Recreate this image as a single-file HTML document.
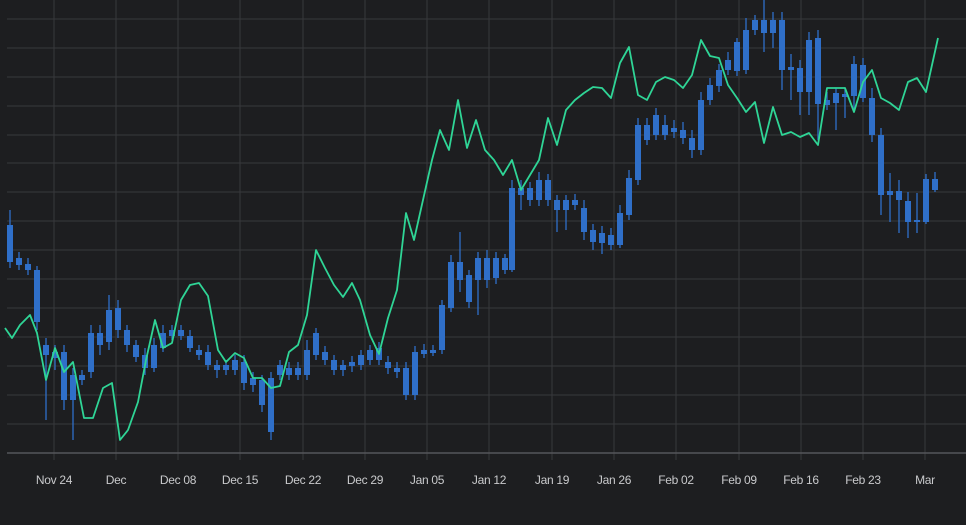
<!DOCTYPE html>
<html><head><meta charset="utf-8"><style>
html,body{margin:0;padding:0;background:#1d1e20;}
svg{display:block}
text{font-family:"Liberation Sans",sans-serif;font-size:12px;fill:#c9cacc;letter-spacing:-0.3px}
</style></head><body>
<svg width="966" height="525" viewBox="0 0 966 525" xmlns="http://www.w3.org/2000/svg">
<rect width="966" height="525" fill="#1d1e20"/>
<g stroke="#38393c" stroke-width="1">
<path d="M7 19H966M7 48H966M7 77H966M7 106H966M7 135H966M7 163H966M7 192H966M7 221H966M7 250H966M7 279H966M7 308H966M7 337H966M7 366H966M7 395H966M7 424H966"/>
<path d="M54 0V460M116 0V460M178 0V460M240 0V460M303 0V460M365 0V460M427 0V460M489 0V460M552 0V460M614 0V460M676 0V460M739 0V460M801 0V460M863 0V460M925 0V460"/>
</g>
<path d="M7 453H966" stroke="#55565a" stroke-width="1.5"/>
<g fill="#c9cacc">
<text x="54" y="484" text-anchor="middle">Nov 24</text>
<text x="116" y="484" text-anchor="middle">Dec</text>
<text x="178" y="484" text-anchor="middle">Dec 08</text>
<text x="240" y="484" text-anchor="middle">Dec 15</text>
<text x="303" y="484" text-anchor="middle">Dec 22</text>
<text x="365" y="484" text-anchor="middle">Dec 29</text>
<text x="427" y="484" text-anchor="middle">Jan 05</text>
<text x="489" y="484" text-anchor="middle">Jan 12</text>
<text x="552" y="484" text-anchor="middle">Jan 19</text>
<text x="614" y="484" text-anchor="middle">Jan 26</text>
<text x="676" y="484" text-anchor="middle">Feb 02</text>
<text x="739" y="484" text-anchor="middle">Feb 09</text>
<text x="801" y="484" text-anchor="middle">Feb 16</text>
<text x="863" y="484" text-anchor="middle">Feb 23</text>
<text x="925" y="484" text-anchor="middle">Mar</text>
</g>
<g stroke="#2f6fc8" stroke-width="1.3">
<path d="M10 210V268M19 252V270M28 258V275M37 266V330M46 338V420M55 345V370M64 345V410M73 368V440M82 370V385M91 325V378M100 325V355M109 295V350M118 300V338M127 325V352M136 340V362M145 348V375M154 338V372M163 325V352M172 325V340M181 325V340M190 330V352M199 345V360M208 345V370M217 360V378M226 360V375M235 355V375M244 355V390M253 372V392M262 375V412M271 372V440M280 360V380M289 362V380M298 362V380M307 340V380M316 328V360M325 346V365M334 355V375M343 360V376M352 356V372M361 350V370M370 345V365M379 342V365M388 356V374M397 362V378M406 362V400M415 346V400M424 344V358M433 345V356M442 300V354M451 255V312M460 232V292M469 270V308M478 252V315M487 250V288M496 252V284M505 254V274M512 180V272M521 180V210M530 182V206M539 172V206M548 174V206M557 195V232M566 195V230M575 194V210M584 200V240M593 224V250M602 226V254M611 228V250M620 205V248M629 170V220M638 118V185M647 118V145M656 108V140M665 115V140M674 120V138M683 122V144M692 130V158M701 92V155M710 78V105M719 64V92M728 52V75M737 38V76M746 18V74M755 15V35M764 0V52M773 12V48M782 12V90M791 54V100M800 60V115M809 32V115M818 30V140M827 92V110M836 88V130M845 88V118M854 56V110M863 58V102M872 88V142M881 128V215M890 173V222M899 180V233M908 192V238M917 193V233M926 174V224M935 172V192"/>
</g>
<g fill="#2f6fc8">
<rect x="7" y="225" width="6" height="37"/><rect x="16" y="258" width="6" height="7"/><rect x="25" y="264" width="6" height="6"/><rect x="34" y="270" width="6" height="52"/><rect x="43" y="345" width="6" height="10"/><rect x="52" y="352" width="6" height="6"/><rect x="61" y="352" width="6" height="48"/><rect x="70" y="375" width="6" height="25"/><rect x="79" y="375" width="6" height="5"/><rect x="88" y="333" width="6" height="39"/><rect x="97" y="333" width="6" height="12"/><rect x="106" y="310" width="6" height="32"/><rect x="115" y="308" width="6" height="22"/><rect x="124" y="330" width="6" height="15"/><rect x="133" y="345" width="6" height="12"/><rect x="142" y="355" width="6" height="13"/><rect x="151" y="345" width="6" height="23"/><rect x="160" y="333" width="6" height="15"/><rect x="169" y="330" width="6" height="6"/><rect x="178" y="330" width="6" height="6"/><rect x="187" y="336" width="6" height="12"/><rect x="196" y="350" width="6" height="5"/><rect x="205" y="352" width="6" height="13"/><rect x="214" y="365" width="6" height="5"/><rect x="223" y="365" width="6" height="5"/><rect x="232" y="360" width="6" height="10"/><rect x="241" y="362" width="6" height="21"/><rect x="250" y="378" width="6" height="7"/><rect x="259" y="380" width="6" height="25"/><rect x="268" y="378" width="6" height="54"/><rect x="277" y="365" width="6" height="10"/><rect x="286" y="368" width="6" height="7"/><rect x="295" y="368" width="6" height="7"/><rect x="304" y="350" width="6" height="25"/><rect x="313" y="333" width="6" height="22"/><rect x="322" y="352" width="6" height="8"/><rect x="331" y="360" width="6" height="10"/><rect x="340" y="365" width="6" height="5"/><rect x="349" y="362" width="6" height="4"/><rect x="358" y="355" width="6" height="10"/><rect x="367" y="350" width="6" height="10"/><rect x="376" y="348" width="6" height="12"/><rect x="385" y="362" width="6" height="6"/><rect x="394" y="368" width="6" height="4"/><rect x="403" y="368" width="6" height="27"/><rect x="412" y="352" width="6" height="43"/><rect x="421" y="350" width="6" height="4"/><rect x="430" y="350" width="6" height="3"/><rect x="439" y="305" width="6" height="45"/><rect x="448" y="262" width="6" height="46"/><rect x="457" y="262" width="6" height="18"/><rect x="466" y="275" width="6" height="27"/><rect x="475" y="258" width="6" height="22"/><rect x="484" y="258" width="6" height="22"/><rect x="493" y="258" width="6" height="20"/><rect x="502" y="258" width="6" height="12"/><rect x="509" y="188" width="6" height="82"/><rect x="518" y="188" width="6" height="7"/><rect x="527" y="188" width="6" height="12"/><rect x="536" y="180" width="6" height="20"/><rect x="545" y="180" width="6" height="20"/><rect x="554" y="200" width="6" height="10"/><rect x="563" y="200" width="6" height="10"/><rect x="572" y="200" width="6" height="5"/><rect x="581" y="208" width="6" height="24"/><rect x="590" y="230" width="6" height="12"/><rect x="599" y="233" width="6" height="10"/><rect x="608" y="235" width="6" height="10"/><rect x="617" y="213" width="6" height="32"/><rect x="626" y="178" width="6" height="37"/><rect x="635" y="125" width="6" height="55"/><rect x="644" y="125" width="6" height="15"/><rect x="653" y="115" width="6" height="20"/><rect x="662" y="125" width="6" height="10"/><rect x="671" y="128" width="6" height="4"/><rect x="680" y="130" width="6" height="8"/><rect x="689" y="138" width="6" height="12"/><rect x="698" y="100" width="6" height="50"/><rect x="707" y="85" width="6" height="15"/><rect x="716" y="70" width="6" height="16"/><rect x="725" y="60" width="6" height="10"/><rect x="734" y="42" width="6" height="29"/><rect x="743" y="30" width="6" height="40"/><rect x="752" y="20" width="6" height="10"/><rect x="761" y="20" width="6" height="13"/><rect x="770" y="20" width="6" height="13"/><rect x="779" y="20" width="6" height="50"/><rect x="788" y="67" width="6" height="3"/><rect x="797" y="68" width="6" height="24"/><rect x="806" y="40" width="6" height="52"/><rect x="815" y="38" width="6" height="66"/><rect x="824" y="100" width="6" height="5"/><rect x="833" y="93" width="6" height="10"/><rect x="842" y="94" width="6" height="3"/><rect x="851" y="64" width="6" height="32"/><rect x="860" y="65" width="6" height="33"/><rect x="869" y="98" width="6" height="37"/><rect x="878" y="135" width="6" height="60"/><rect x="887" y="191" width="6" height="4"/><rect x="896" y="191" width="6" height="9"/><rect x="905" y="201" width="6" height="21"/><rect x="914" y="220" width="6" height="2"/><rect x="923" y="179" width="6" height="43"/><rect x="932" y="179" width="6" height="11"/>
</g>
<polyline fill="none" stroke="#2fd596" stroke-width="1.8" stroke-linejoin="round" points="5,328 12,338 20,325 30,315 37,333 46,380 55,348 64,372 73,362 84,418 93,418 103,388 112,383 120,440 128,430 138,402 146,360 155,320 163,348 172,343 181,300 190,285 199,283 208,296 218,350 226,362 235,353 244,358 253,378 262,378 271,388 280,386 289,352 298,345 307,315 316,250 325,268 334,285 343,297 352,283 360,300 370,335 379,354 388,318 397,290 406,213 414,240 423,200 432,160 440,130 449,150 458,100 467,148 476,120 485,150 494,160 503,175 512,160 521,190 530,175 539,160 548,118 557,145 566,110 575,100 584,93 593,87 602,88 611,98 620,63 629,47 638,95 647,100 656,82 665,77 674,80 683,88 692,75 701,40 710,56 719,58 728,85 737,98 746,112 755,102 764,143 773,107 782,135 791,132 800,137 809,133 818,145 827,88 836,88 845,88 854,112 863,82 872,70 881,98 890,103 899,110 908,82 917,78 926,92 938,38"/>
</svg>
</body></html>
